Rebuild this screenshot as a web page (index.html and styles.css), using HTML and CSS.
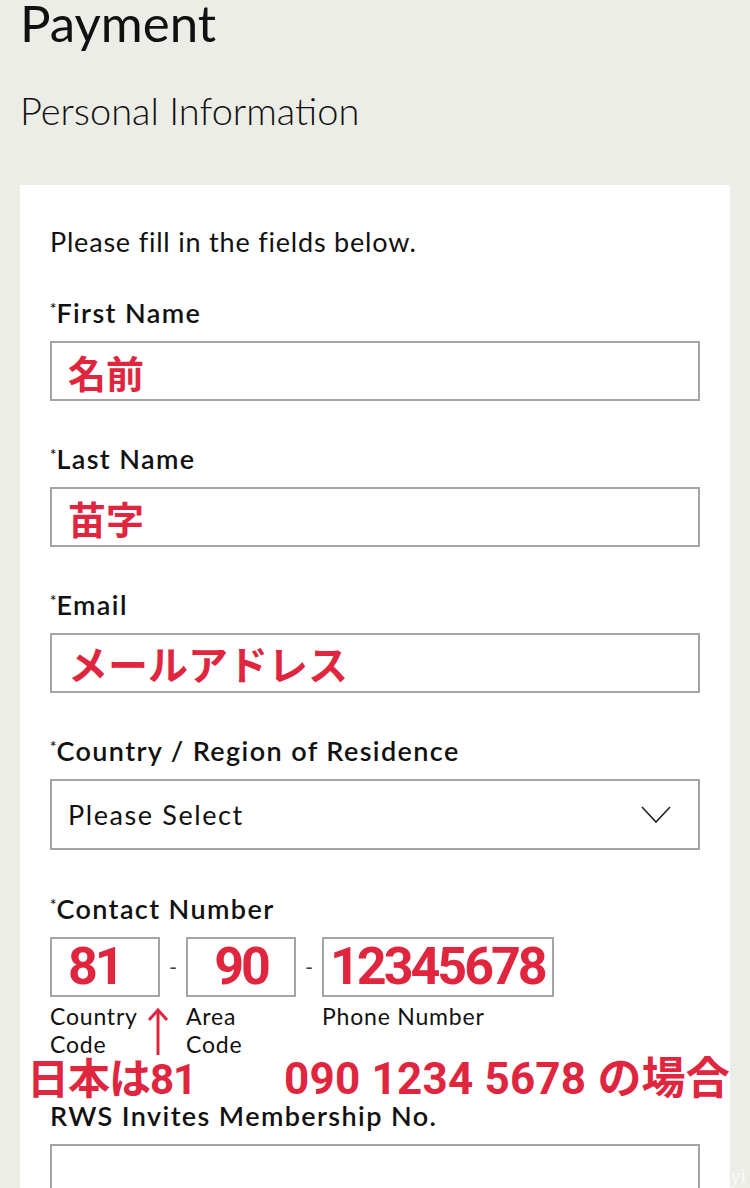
FILE: index.html
```html
<!DOCTYPE html>
<html lang="en">

<head>
    <meta charset="UTF-8">
    <title>Payment</title>
    <link rel="stylesheet" href="styles.css">
</head>

<body>
    <h1 class="page-title">Payment</h1>
    <h2 class="section-title">Personal Information</h2>

    <div class="card">
        <p class="intro">Please fill in the fields below.</p>

        <div class="field">
            <label><sup>*</sup>First Name</label>
            <div class="input"><span class="note note-sm">名前</span></div>
        </div>

        <div class="field">
            <label><sup>*</sup>Last Name</label>
            <div class="input"><span class="note note-sm">苗字</span></div>
        </div>

        <div class="field">
            <label><sup>*</sup>Email</label>
            <div class="input"><span class="note note-md">メールアドレス</span></div>
        </div>

        <div class="field field-select">
            <label><sup>*</sup>Country / Region of Residence</label>
            <div class="select">
                <span>Please Select</span>
                <svg width="30" height="18" viewBox="0 0 30 18">
                    <polyline points="1,1 15,16 29,1" fill="none" stroke="#222" stroke-width="1.6"/>
                </svg>
            </div>
        </div>

        <div class="field field-phone">
            <label><sup>*</sup>Contact Number</label>
            <div class="phone">
                <div class="phone-part">
                    <div class="box box-sm"><span class="digits">81</span></div>
                    <div class="caption">Country Code</div>
                </div>
                <div class="dash">-</div>
                <div class="phone-part">
                    <div class="box box-sm box-center"><span class="digits">90</span></div>
                    <div class="caption">Area Code</div>
                </div>
                <div class="dash">-</div>
                <div class="phone-part">
                    <div class="box box-lg"><span class="digits">12345678</span></div>
                    <div class="caption caption-wide">Phone Number</div>
                </div>
                <svg class="arrow" width="20" height="48" viewBox="0 0 20 48">
                    <line x1="10" y1="3" x2="10" y2="48" stroke="#e0263f" stroke-width="3"/>
                    <polyline points="1,13 10,3 19,13" fill="none" stroke="#e0263f" stroke-width="3"/>
                </svg>
            </div>
            <div class="annotations">
                <span class="note note-lg">日本は81</span>
                <span class="note note-lg note-wide">090 1234 5678 の場合</span>
            </div>
        </div>

        <div class="field field-last">
            <label>RWS Invites Membership No.</label>
            <div class="input input-tall"></div>
        </div>
    </div>

    <span class="watermark">yi</span>
</body>

</html>
```

FILE: styles.css
```css
body {
    margin: 0;
    background-color: #edede8;
    font-family: Lato, "Noto Sans", sans-serif;
    color: #111;
    overflow: hidden;
    height: 1188px;
    position: relative;
}
.page-title {
    margin: 0 0 0 20px;
    font-size: 51px;
    line-height: 46px;
    font-weight: 400;
}
.section-title {
    margin: 41px 0 0 20px;
    font-size: 38px;
    line-height: 46px;
    font-weight: 300;
}
.card {
    margin: 52px 0 0 20px;
    width: 710px;
    box-sizing: border-box;
    padding: 42px 30px 0 30px;
    background-color: #fff;
}
.intro {
    margin: 0;
    font-size: 27px;
    line-height: 30px;
    font-weight: 400;
    letter-spacing: 0.8px;
}
.field {
    margin-top: 41px;
}
.field + .field {
    margin-top: 43px;
}
.field-phone {
    margin-top: 44px !important;
}
label {
    display: block;
    font-size: 27px;
    line-height: 30px;
    font-weight: 600;
    letter-spacing: 1.4px;
    margin-bottom: 13px;
}
label sup {
    font-size: 15px;
    vertical-align: 9px;
    line-height: 0;
    letter-spacing: 0;
}
.input {
    height: 60px;
    border: 2px solid #a4a4a4;
    box-sizing: border-box;
    display: flex;
    align-items: center;
    padding-left: 16px;
}
.input-tall {
    height: 80px;
}
.note {
    color: #e0263f;
    font-family: Roboto, "Noto Sans CJK JP", sans-serif;
    font-weight: 700;
    white-space: nowrap;
}
.note-sm {
    font-size: 38px;
}
.note-md {
    font-size: 40px;
}
.note-lg {
    font-size: 42px;
    line-height: 43px;
    letter-spacing: -1px;
}
.note-wide {
    font-size: 44px;
    letter-spacing: 0.2px;
}
.select {
    height: 71px;
    border: 2px solid #a4a4a4;
    box-sizing: border-box;
    display: flex;
    align-items: center;
    justify-content: space-between;
    padding: 0 27px 0 16px;
    font-size: 27px;
    letter-spacing: 1.6px;
}
.phone {
    display: flex;
    align-items: flex-start;
    position: relative;
}
.phone-part {
    display: flex;
    flex-direction: column;
}
.box {
    height: 60px;
    border: 2px solid #a4a4a4;
    box-sizing: border-box;
    display: flex;
    align-items: center;
}
.box-sm {
    width: 110px;
    padding-left: 16px;
}
.box-center {
    justify-content: center;
    padding-left: 0;
}
.box-lg {
    width: 232px;
    padding-left: 6px;
}
.digits {
    color: #e0263f;
    font-family: Roboto, sans-serif;
    font-weight: 700;
    font-size: 52px;
    letter-spacing: -3px;
    line-height: 1;
}
.dash {
    width: 26px;
    text-align: center;
    font-size: 22px;
    line-height: 60px;
    color: #444;
}
.caption {
    margin-top: 5px;
    width: 100px;
    font-size: 23px;
    line-height: 28px;
    letter-spacing: 0.8px;
}
.caption-wide {
    width: auto;
}
.arrow {
    position: absolute;
    left: 98px;
    top: 70px;
}
.annotations {
    display: flex;
    justify-content: space-between;
    margin: 0 -30px 0 -23px;
    height: 43px;
}
.field-last {
    margin-top: 0 !important;
}
.watermark {
    position: absolute;
    right: 4px;
    bottom: 2px;
    font-family: "Liberation Serif", serif;
    font-size: 20px;
    line-height: 20px;
    color: #fafaf8;
}
```
